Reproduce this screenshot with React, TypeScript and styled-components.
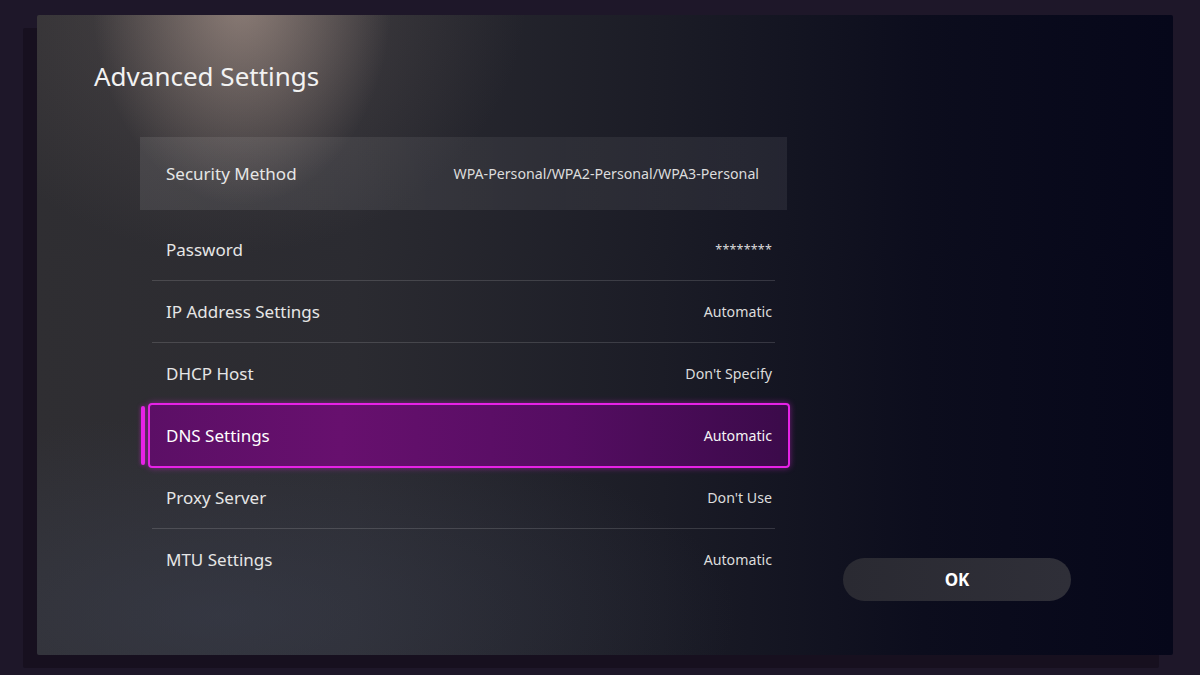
import React from "react";
import styled, { createGlobalStyle } from "styled-components";

const GlobalStyle = createGlobalStyle`
  html, body {
    margin: 0;
    padding: 0;
    background: #1e1729;
  }
  body {
    font-family: "Noto Sans", "Open Sans", sans-serif;
    -webkit-font-smoothing: antialiased;
  }
`;

interface RowData {
  label: string;
  value: string;
  focused?: boolean;
  masked?: boolean;
}

const rows: RowData[] = [
  { label: "Password", value: "********", masked: true },
  { label: "IP Address Settings", value: "Automatic" },
  { label: "DHCP Host", value: "Don't Specify" },
  { label: "DNS Settings", value: "Automatic", focused: true },
  { label: "Proxy Server", value: "Don't Use" },
  { label: "MTU Settings", value: "Automatic" },
];

const App: React.FC = () => {
  return (
    <>
      <GlobalStyle />
      <Frame>
        <Screen>
          <Title>Advanced Settings</Title>
          <Body>
            <List>
              <HeaderRow>
                <Label>Security Method</Label>
                <Value>WPA-Personal/WPA2-Personal/WPA3-Personal</Value>
              </HeaderRow>
              {rows.map((r) => (
                <Row key={r.label} $focused={r.focused}>
                  <Label $focused={r.focused}>{r.label}</Label>
                  <Value $focused={r.focused} $masked={r.masked}>
                    {r.value}
                  </Value>
                </Row>
              ))}
            </List>
            <Aside>
              <OkButton>OK</OkButton>
            </Aside>
          </Body>
        </Screen>
      </Frame>
    </>
  );
};
export default App;

const Frame = styled.div`
  width: 1200px;
  height: 675px;
  padding: 15px 0 0 37px;
  box-sizing: border-box;
  overflow: hidden;
`;

const Screen = styled.div`
  width: 1136px;
  height: 640px;
  display: flex;
  flex-direction: column;
  border-radius: 2px;
  box-shadow: -14px 13px 0 #17101f;
  background:
    radial-gradient(ellipse 150px 210px at 205px -20px, rgba(170, 150, 140, 0.7), rgba(170, 150, 140, 0) 100%),
    radial-gradient(ellipse 300px 260px at 190px -20px, rgba(120, 108, 104, 0.35), rgba(120, 108, 104, 0) 100%),
    radial-gradient(ellipse 520px 200px at 180px 600px, rgba(62, 68, 86, 0.45), rgba(62, 68, 86, 0) 100%),
    linear-gradient(90deg, #2f2e32 0%, #2b2b31 28%, #1b1c26 55%, #0c0d1d 78%, #06071a 100%);
`;

const Title = styled.h1`
  margin: 43px 0 0 57px;
  font-size: 26px;
  line-height: 36px;
  font-weight: 400;
  color: #f2f2f2;
`;

const Body = styled.div`
  display: flex;
  align-items: flex-end;
  margin-top: 43px;
  padding-left: 103px;
`;

const List = styled.div`
  width: 647px;
  display: flex;
  flex-direction: column;
`;

const HeaderRow = styled.div`
  height: 73px;
  margin-bottom: 9px;
  padding: 0 28px 0 26px;
  display: flex;
  align-items: center;
  justify-content: space-between;
  background: linear-gradient(90deg, rgba(255, 255, 255, 0.09), rgba(255, 255, 255, 0.06) 60%, rgba(255, 255, 255, 0.07));
`;

const Row = styled.div<{ $focused?: boolean }>`
  position: relative;
  height: 61px;
  margin: 0 12px;
  padding: 0 3px 0 14px;
  display: flex;
  align-items: center;
  justify-content: space-between;
  border-bottom: 1px solid rgba(255, 255, 255, 0.14);

  &:last-child {
    border-bottom: none;
  }

  ${(p) =>
    p.$focused &&
    `
    &::before {
      content: "";
      position: absolute;
      left: -4px;
      right: -15px;
      top: -2px;
      bottom: -2px;
      border: 2px solid #e622e6;
      border-radius: 4px;
      box-sizing: border-box;
      background: linear-gradient(90deg, #5c0f66 0%, #67106e 30%, #550d62 65%, #3b0a4a 100%);
      box-shadow: 0 0 6px rgba(230, 34, 230, 0.45);
    }
    &::after {
      content: "";
      position: absolute;
      left: -11px;
      top: 1px;
      bottom: 1px;
      width: 4px;
      border-radius: 2px;
      background: #e622e6;
      box-shadow: 0 0 4px rgba(230, 34, 230, 0.5);
    }
  `}
`;

const Label = styled.span<{ $focused?: boolean }>`
  position: relative;
  z-index: 1;
  font-size: 17px;
  color: ${(p) => (p.$focused ? "#ffffff" : "#e6e6e6")};
`;

const Value = styled.span<{ $focused?: boolean; $masked?: boolean }>`
  position: relative;
  z-index: 1;
  font-size: ${(p) => (p.$masked ? "12.5px" : "14.2px")};
  letter-spacing: ${(p) => (p.$masked ? "0.2px" : "0")};
  color: ${(p) => (p.$focused ? "#f4f4f4" : "#dcdcdc")};
`;

const Aside = styled.div`
  margin-left: 56px;
  margin-bottom: -11px;
`;

const OkButton = styled.button`
  width: 228px;
  height: 43px;
  border: none;
  border-radius: 22px;
  background: linear-gradient(90deg, #2a2a32, #2f2f38);
  color: #ffffff;
  font-family: "Noto Sans", "Open Sans", sans-serif;
  font-size: 17px;
  font-weight: 700;
  cursor: pointer;
`;
